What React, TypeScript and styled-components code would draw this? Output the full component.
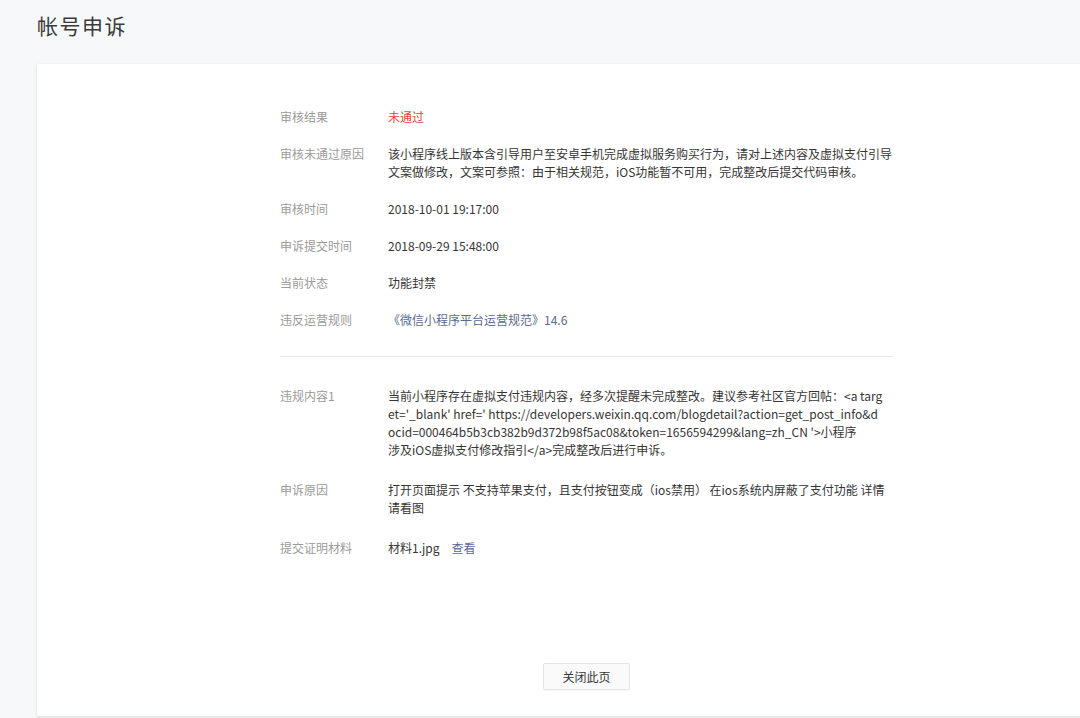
import React from "react";
import styled, { createGlobalStyle } from "styled-components";

const Global = createGlobalStyle`
  html, body { margin: 0; padding: 0; background: #f6f8f9; overflow: hidden; }
  body { font-family: "Noto Sans CJK SC", "Noto Sans", sans-serif; color: #353535; }
`;

const Page = styled.div`
  width: 1080px;
  height: 718px;
  overflow: hidden;
  padding-left: 37px;
  box-sizing: border-box;
`;

const Title = styled.h1`
  margin: 0;
  height: 64px;
  padding-top: 9px;
  box-sizing: border-box;
  font-size: 21px;
  line-height: 32px;
  font-weight: 400;
  color: #3a3a3a;
  letter-spacing: 1.5px;
`;

const Card = styled.div`
  width: 1099px;
  height: 653px;
  background: #fff;
  box-sizing: border-box;
  padding: 44px 0 26px;
  display: flex;
  flex-direction: column;
  align-items: center;
  box-shadow: 0 1px 2px rgba(0, 0, 0, 0.08), -1px 0 3px rgba(0, 0, 0, 0.03);
  border-bottom: 1px solid #e4e5e7;
`;

const Content = styled.div`
  width: 613px;
  flex: 1;
  display: flex;
  flex-direction: column;
`;

const Section = styled.div<{ $gap: number }>`
  display: flex;
  flex-direction: column;
  gap: ${(p) => p.$gap}px;
`;

const Row = styled.div`
  display: grid;
  grid-template-columns: 108px 1fr;
  font-size: 12px;
  line-height: 18px;
`;

const Label = styled.div`
  color: #9a9a9a;
`;

const Value = styled.div<{ $tone?: "red" | "link" }>`
  color: ${(p) => (p.$tone === "red" ? "#e64340" : p.$tone === "link" ? "#576b95" : "#353535")};
  word-break: break-all;
`;

const Line = styled.span`
  display: block;
  white-space: nowrap;
`;

const Link = styled.a`
  color: #576b95;
  text-decoration: none;
  margin-left: 12px;
  cursor: pointer;
`;

const Divider = styled.hr`
  border: 0;
  height: 1px;
  background: #e7e7eb;
  margin: 27px 0 30px;
  width: 100%;
`;

const Footer = styled.div`
  margin-top: auto;
  display: flex;
  justify-content: center;
`;

const Button = styled.button`
  width: 87px;
  height: 27px;
  border: 1px solid #e4e4e4;
  border-radius: 2px;
  background: #fafafa;
  color: #353535;
  font-family: inherit;
  font-size: 12px;
  padding: 0;
  cursor: pointer;
  box-shadow: 0 1px 1px rgba(0, 0, 0, 0.03);
`;

type Item = { label: string; lines: React.ReactNode[]; tone?: "red" | "link" };

const top: Item[] = [
  { label: "审核结果", lines: ["未通过"], tone: "red" },
  {
    label: "审核未通过原因",
    lines: [
      "该小程序线上版本含引导用户至安卓手机完成虚拟服务购买行为，请对上述内容及虚拟支付引导",
      "文案做修改，文案可参照：由于相关规范，iOS功能暂不可用，完成整改后提交代码审核。",
    ],
  },
  { label: "审核时间", lines: ["2018-10-01 19:17:00"] },
  { label: "申诉提交时间", lines: ["2018-09-29 15:48:00"] },
  { label: "当前状态", lines: ["功能封禁"] },
  { label: "违反运营规则", lines: ["《微信小程序平台运营规范》14.6"], tone: "link" },
];

const bottom: Item[] = [
  {
    label: "违规内容1",
    lines: [
      "当前小程序存在虚拟支付违规内容，经多次提醒未完成整改。建议参考社区官方回帖：<a targ",
      "et='_blank' href=' https://developers.weixin.qq.com/blogdetail?action=get_post_info&d",
      "ocid=000464b5b3cb382b9d372b98f5ac08&token=1656594299&lang=zh_CN '>小程序",
      "涉及iOS虚拟支付修改指引</a>完成整改后进行申诉。",
    ],
  },
  {
    label: "申诉原因",
    lines: [
      "打开页面提示 不支持苹果支付，且支付按钮变成（ios禁用） 在ios系统内屏蔽了支付功能 详情",
      "请看图",
    ],
  },
  {
    label: "提交证明材料",
    lines: [
      <>
        材料1.jpg<Link>查看</Link>
      </>,
    ],
  },
];

const renderRows = (items: Item[]) =>
  items.map((it) => (
    <Row key={it.label}>
      <Label>{it.label}</Label>
      <Value $tone={it.tone}>
        {it.lines.map((l, i) => (
          <Line key={i}>{l}</Line>
        ))}
      </Value>
    </Row>
  ));

export default function App() {
  return (
    <Page>
      <Global />
      <Title>帐号申诉</Title>
      <Card>
        <Content>
          <Section $gap={19}>{renderRows(top)}</Section>
          <Divider />
          <Section $gap={22}>{renderRows(bottom)}</Section>
          <Footer>
            <Button>关闭此页</Button>
          </Footer>
        </Content>
      </Card>
    </Page>
  );
}
